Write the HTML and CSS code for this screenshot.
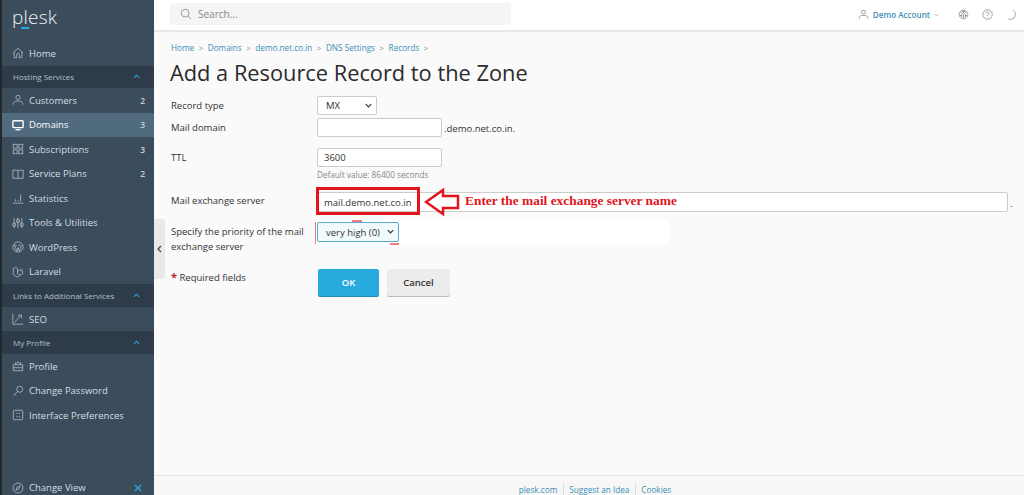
FILE: index.html
```html
<!DOCTYPE html>
<html lang="en">
<head>
<meta charset="utf-8">
<title>Add a Resource Record to the Zone</title>
<link rel="stylesheet" href="styles.css">
</head>
<body>
<div class="app">
  <aside class="sidebar">
    <div class="logo"><span class="logo-text">p<span class="logo-l">l</span>esk</span></div>
    <a class="nav-row"><svg class="ico" viewBox="0 0 14 14"><path d="M1 7 7 1.500 13 7M2.500 6v6.500h3v-3.500a1.500 1.500 0 0 1 3 0v3.500h3V6"/></svg><span class="nav-label">Home</span></a>
    <div class="nav-head"><span>Hosting Services</span><svg class="chev" viewBox="0 0 8 5"><path d="M1 4 4 1l3 3"/></svg></div>
    <a class="nav-row"><svg class="ico" viewBox="0 0 14 14"><circle cx="7" cy="4" r="2.500"/><path d="M1.500 12.500V11c0-1.800 2-2.800 5.500-2.800s5.500 1 5.500 2.800v1.500"/></svg><span class="nav-label">Customers</span><span class="count">2</span></a>
    <a class="nav-row active"><svg class="ico bright" viewBox="0 0 14 14"><rect x="1" y="2" width="12" height="8" rx="1" stroke-width="1.600"/><path d="M4 12.500h6" stroke-width="1.600"/></svg><span class="nav-label">Domains</span><span class="count">3</span></a>
    <a class="nav-row"><svg class="ico" viewBox="0 0 14 14"><rect x="1.500" y="1.500" width="4.500" height="4.500"/><rect x="8" y="1.500" width="4.500" height="4.500"/><rect x="1.500" y="8" width="4.500" height="4.500"/><rect x="8" y="8" width="4.500" height="4.500"/></svg><span class="nav-label">Subscriptions</span><span class="count">3</span></a>
    <a class="nav-row"><svg class="ico" viewBox="0 0 14 14"><path d="M1 2.500h5l1 1 1-1h5v9.500H8l-1 .5-1-.5H1zM7 3.500v9"/></svg><span class="nav-label">Service Plans</span><span class="count">2</span></a>
    <a class="nav-row"><svg class="ico" viewBox="0 0 14 14"><path d="M1 13h12M4 11V8.500M7 11V9.500M10 11V3"/></svg><span class="nav-label">Statistics</span></a>
    <a class="nav-row"><svg class="ico" viewBox="0 0 14 14"><path d="M2.500 1v12M7 1v12M11.500 1v12"/><ellipse cx="2.500" cy="9" rx="1.800" ry="2.200"/><ellipse cx="7" cy="4.500" rx="1.800" ry="2.200"/><ellipse cx="11.500" cy="9" rx="1.800" ry="2.200"/></svg><span class="nav-label">Tools &amp; Utilities</span></a>
    <a class="nav-row"><svg class="ico" viewBox="0 0 14 14"><circle cx="7" cy="7" r="6"/><path d="M3 5l2.500 7L7 7.500 8.500 12 11 5M2.500 5h3M7 5h3"/></svg><span class="nav-label">WordPress</span></a>
    <a class="nav-row"><svg class="ico" viewBox="0 0 14 14"><path d="M1.500 3 4 1.500 6.500 3v6l3 1.500L12.500 9V6.500L10 5l2.500-1.500M1.500 3v7l5 3 3-2M6.500 6l3-1.500"/></svg><span class="nav-label">Laravel</span></a>
    <div class="nav-head"><span>Links to Additional Services</span><svg class="chev" viewBox="0 0 8 5"><path d="M1 4 4 1l3 3"/></svg></div>
    <a class="nav-row"><svg class="ico" viewBox="0 0 14 14"><path d="M1 1v12h12M3 11l7-8M7 2.500h4v4"/></svg><span class="nav-label">SEO</span></a>
    <div class="nav-head"><span>My Profile</span><svg class="chev" viewBox="0 0 8 5"><path d="M1 4 4 1l3 3"/></svg></div>
    <a class="nav-row"><svg class="ico" viewBox="0 0 14 14"><path d="M1.500 5.500h11v7h-11zM4 5.500V3l1.500 1L7 2l1.500 2L10 3v2.500M1.500 9h11"/></svg><span class="nav-label">Profile</span></a>
    <a class="nav-row"><svg class="ico" viewBox="0 0 14 14"><circle cx="9" cy="5" r="3.500"/><path d="M6.500 7.500 1.500 12.500M3 11l1.500 1.500"/></svg><span class="nav-label">Change Password</span></a>
    <a class="nav-row"><svg class="ico" viewBox="0 0 14 14"><rect x="1.500" y="1.500" width="11" height="11" rx="1"/><path d="M5 5h1.500M8 5h1.500M5 9h1.500M8 9h1.500"/></svg><span class="nav-label">Interface Preferences</span></a>
    <a class="nav-row nav-bottom"><svg class="ico" viewBox="0 0 14 14"><circle cx="7" cy="7" r="5.800"/><path d="M4.500 9.500 6 6l3.500-1.500L8 8z"/></svg><span class="nav-label">Change View</span><svg class="close" viewBox="0 0 8 8"><path d="M1 1l6 6M7 1 1 7"/></svg></a>
  </aside>

  <div class="main">
    <header class="topbar">
      <div class="search"><svg class="search-ico" viewBox="0 0 14 14"><circle cx="6" cy="6" r="4.500"/><path d="M9.500 9.500 13 13"/></svg><span>Search...</span></div>
      <div class="top-actions">
        <svg class="top-ico user" viewBox="0 0 14 14"><circle cx="7" cy="4" r="2.500"/><path d="M1.500 12.500V11c0-1.800 2-2.800 5.500-2.800s5.500 1 5.500 2.800v1.500"/></svg>
        <span class="account">Demo Account</span>
        <svg class="caret" viewBox="0 0 8 5"><path d="M1 1l3 3 3-3"/></svg>
        <svg class="top-ico cube" viewBox="0 0 14 14"><circle cx="7" cy="7" r="5.500"/><path d="M7 7 3 3.500M7 7l4-3.500M7 7v5"/><path class="fill" d="M5 2.500h4L7 5zM2.500 8l2.500-1 .5 3.500zM11.500 8 9 7l-.5 3.500z"/></svg>
        <svg class="top-ico help" viewBox="0 0 14 14"><circle cx="7" cy="7" r="6"/><path d="M5.200 5.500a1.900 1.900 0 1 1 2.800 1.700c-.7.400-1 .8-1 1.500M7 10v.8"/></svg>
        <svg class="top-ico moon" viewBox="0 0 14 14"><path d="M7.500 1a6 6 0 0 1-6 11.500A6.500 6.500 0 0 0 7.500 1z"/></svg>
      </div>
    </header>

    <main class="content">
      <nav class="crumbs">
        <a>Home</a><i>&gt;</i><a>Domains</a><i>&gt;</i><a>demo.net.co.in</a><i>&gt;</i><a>DNS Settings</a><i>&gt;</i><a>Records</a><i>&gt;</i>
      </nav>
      <h1 class="title">Add a Resource Record to the Zone</h1>

      <form class="form">
        <div class="row row-type">
          <label class="lbl lbl-low">Record type</label>
          <div class="select-wrap">
            <select class="select select-type"><option>MX</option></select>
            <svg class="select-chev" viewBox="0 0 8 5"><path d="M1 1l3 3 3-3"/></svg>
          </div>
        </div>
        <div class="row row-domain">
          <label class="lbl lbl-low">Mail domain</label>
          <input class="input input-short" type="text">
          <span class="suffix">.demo.net.co.in.</span>
        </div>
        <div class="row row-ttl">
          <label class="lbl lbl-low">TTL</label>
          <input class="input input-short" type="text" value="3600">
        </div>
        <div class="hint">Default value: 86400 seconds</div>
        <div class="row row-mx">
          <label class="lbl">Mail exchange server</label>
          <input class="input input-long" type="text" value="mail.demo.net.co.in">
          <span class="dot">.</span>
        </div>
        <div class="row row-priority">
          <label class="lbl lbl-wrap">Specify the priority of the mail exchange server</label>
          <div class="select-wrap select-wrap-up">
            <select class="select select-priority"><option>very high (0)</option></select>
            <svg class="select-chev" viewBox="0 0 8 5"><path d="M1 1l3 3 3-3"/></svg>
          </div>
        </div>
        <div class="row row-actions">
          <div class="lbl req"><b>*</b> Required fields</div>
          <button class="btn btn-ok" type="button">OK</button>
          <button class="btn btn-cancel" type="button">Cancel</button>
        </div>
      </form>

      <button class="handle" type="button" aria-label="Collapse"><svg viewBox="0 0 5 8"><path d="M4 1 1 4l3 3"/></svg></button>

      <div class="erase"></div>
      <div class="scrap scrap-left"></div>
      <div class="scrap scrap-top"></div>
      <div class="scrap scrap-bottom"></div>
      <div class="redbox"></div>
      <svg class="arrow" viewBox="0 0 36 28"><path d="M2 14 19 2v6h15v12H19v6z"/></svg>
      <div class="note">Enter the mail exchange server name</div>
    </main>

    <footer class="footer">
      <a>plesk.com</a><a>Suggest an Idea</a><a>Cookies</a>
    </footer>
  </div>
</div>
</body>
</html>
```

FILE: styles.css
```css
* { box-sizing: border-box; }
html, body { margin: 0; height: 100%; overflow: hidden; }
body { font-family: "Open Sans", sans-serif; font-size: 9.500px; color: #333; background: #fafafa; }
.app { display: flex; height: 495px; }

.sidebar { width: 154px; flex: none; height: 495px; background: #3b4c5c; border-left: 2px solid #23282d; color: #d5dde3; display: flex; flex-direction: column; overflow: hidden; }
.logo { height: 41px; padding: 3px 0 0 10px; flex: none; }
.logo-text { display: inline-block; font-weight: 300; font-size: 19px; line-height: 28px; letter-spacing: .2px; color: #eef2f4; position: relative; }
.logo-l { position: relative; }
.logo-l::after { content: ""; position: absolute; left: -3px; top: 23px; width: 8px; height: 1.500px; background: #28aade; }
.nav-row { height: 24.500px; flex: none; display: flex; align-items: center; padding: 0 8px 0 10px; font-size: 9.500px; color: #d5dde3; }
.nav-row.active { background: #506a7e; color: #fff; }
.nav-label { margin-left: 5px; flex: 1; white-space: nowrap; }
.count { font-size: 8.500px; font-weight: 600; color: #c5d0d8; margin-right: 1px; }
.ico { width: 12px; height: 12px; flex: none; fill: none; stroke: #aab7c1; stroke-width: 1; }
.ico.bright { stroke: #fff; }
.nav-head { height: 22.700px; flex: none; background: #2e3c49; display: flex; align-items: center; justify-content: space-between; padding: 0 14px 0 11px; font-size: 8px; color: #b3c0ca; }
.chev { width: 7px; height: 5px; fill: none; stroke: #28aade; stroke-width: 1.200; }
.nav-bottom { margin-top: auto; margin-bottom: -5px; padding-right: 12px; }
.close { width: 8px; height: 8px; fill: none; stroke: #28aade; stroke-width: 1.200; }

.main { flex: 1; min-width: 0; display: flex; flex-direction: column; }
.topbar { height: 32px; flex: none; background: #fff; border-bottom: 2px solid #e8e8e8; display: flex; align-items: flex-start; justify-content: space-between; padding: 3px 6px 0 16px; }
.search { width: 341px; height: 22px; background: #f5f5f5; border-radius: 3px; display: flex; align-items: center; padding-left: 10px; color: #888; font-size: 10px; }
.search-ico { width: 12px; height: 12px; margin-right: 6px; fill: none; stroke: #8a8a8a; stroke-width: 1; }
.top-actions { display: flex; align-items: center; height: 23px; color: #3a8fb5; }
.top-ico { width: 11px; height: 11px; fill: none; stroke: #888; stroke-width: 1; }
.user { margin-right: 4px; }
.account { font-size: 8.100px; font-weight: 600; color: #3f8fb3; }
.caret { width: 5px; height: 4px; margin-left: 4px; fill: none; stroke: #999; stroke-width: 1; }
.cube { margin-left: 19px; }
.cube .fill { fill: #777; stroke: none; }
.help { margin-left: 13px; }
.moon { margin-left: 14px; }
.moon path { fill: #999; stroke: #999; stroke-width: .5; }

.content { flex: 1; position: relative; padding: 0 16px; min-height: 0; }
.crumbs { height: 30px; padding-top: 0; display: flex; align-items: center; font-size: 8.200px; color: #3a8fb5; padding-left: 1px; }
.crumbs i { font-style: normal; color: #888; margin: 0 4.500px; font-size: 8px; }
.title { margin: 0; height: 29px; font-size: 21.800px; font-weight: 400; line-height: 21px; color: #2b2b2b; white-space: nowrap; }
.form { margin-top: 5px; }
.row { display: flex; align-items: flex-start; }
.lbl { width: 147px; flex: none; font-size: 9.500px; line-height: 14.500px; padding: 2px 0 0 1px; color: #333; }
.lbl-low { padding-top: 3px; }
.lbl-wrap { padding-right: 10px; margin-top: -1px; }
.input { height: 19px; border: 1px solid #ccc; border-radius: 2px; background: #fff; font: 9.500px "Open Sans", sans-serif; color: #333; padding: 0 6px; }
.input-short { width: 125px; }
.input-long { width: 691px; height: 20px; flex: none; }
.select-wrap { position: relative; display: flex; }
.select-wrap-up { margin-top: -2px; }
.select { appearance: none; -webkit-appearance: none; height: 19px; border: 1px solid #ccc; border-radius: 2px; background: #fff; font: 9.500px "Open Sans", sans-serif; color: #333; padding: 0 0 0 8px; }
.select-type { width: 60px; }
.select-priority { width: 82px; height: 20px; border-color: #59a9cf; background: #f1fafd; }
.select-chev { position: absolute; right: 5px; top: 7px; width: 7px; height: 5px; fill: none; stroke: #333; stroke-width: 1.400; pointer-events: none; }
.suffix { margin-left: 2px; line-height: 21px; }
.dot { margin-left: 2px; line-height: 24px; flex: none; }
.row-type { height: 19px; margin-bottom: 3px; }
.row-domain { height: 19px; margin-bottom: 11px; }
.row-ttl { height: 19px; }
.hint { margin: 1px 0 0 147px; height: 15px; font-size: 8.200px; line-height: 14px; color: #888; }
.row-mx { height: 20px; margin-top: 9px; position: relative; z-index: 2; }
.row-priority { height: 29px; margin-top: 12px; position: relative; z-index: 2; }
.row-actions { margin-top: 16px; align-items: flex-start; position: relative; z-index: 2; }
.req { padding-top: 2px; }
.req b { color: #b3262d; font-weight: 700; font-size: 11px; line-height: 10px; }
.btn { height: 27px; border: 0; border-radius: 2px; font: 600 9.500px "Open Sans", sans-serif; }
.btn-ok { width: 61px; margin-left: 1px; background: #28aade; color: #fff; box-shadow: 0 1px 0 #1c87b3; }
.btn-cancel { width: 63px; margin-left: 8px; background: #ececec; color: #333; box-shadow: 0 1px 0 #bbb; }

.handle { position: absolute; left: 0; top: 187px; width: 11px; height: 60px; padding: 0; border: 0; border-radius: 0 3px 3px 0; background: #e9e9e9; display: flex; align-items: center; justify-content: center; }
.handle svg { width: 5px; height: 8px; fill: none; stroke: #444; stroke-width: 1.200; }
.erase { position: absolute; left: 160px; top: 187px; width: 356px; height: 28px; background: #fff; border-radius: 10px; z-index: 1; }
.scrap { position: absolute; background: #ec7a80; z-index: 3; }
.scrap-left { left: 161px; top: 190px; width: 1px; height: 22px; }
.scrap-top { left: 198px; top: 188px; width: 10px; height: 2px; }
.scrap-bottom { left: 236px; top: 211px; width: 9px; height: 2px; }
.redbox { position: absolute; left: 162px; top: 155px; width: 104px; height: 28px; border: 3px solid #e2141c; z-index: 3; }
.arrow { position: absolute; left: 270px; top: 156px; width: 36px; height: 28px; z-index: 3; fill: #fff; stroke: #e2141c; stroke-width: 2.500; }
.note { position: absolute; left: 311px; top: 161px; font-family: "Liberation Serif", serif; font-weight: 700; font-size: 13.400px; line-height: 16px; color: #e2141c; white-space: nowrap; z-index: 3; }

.footer { height: 20px; flex: none; border-top: 1px solid #e6e6e6; background: #f7f7f7; display: flex; align-items: center; justify-content: center; padding: 7px 0 0 12px; font-size: 8.200px; color: #3a8fb5; }
.footer a { padding: 0 5.500px; }
.footer a + a { border-left: 1px solid #ddd; }
```
